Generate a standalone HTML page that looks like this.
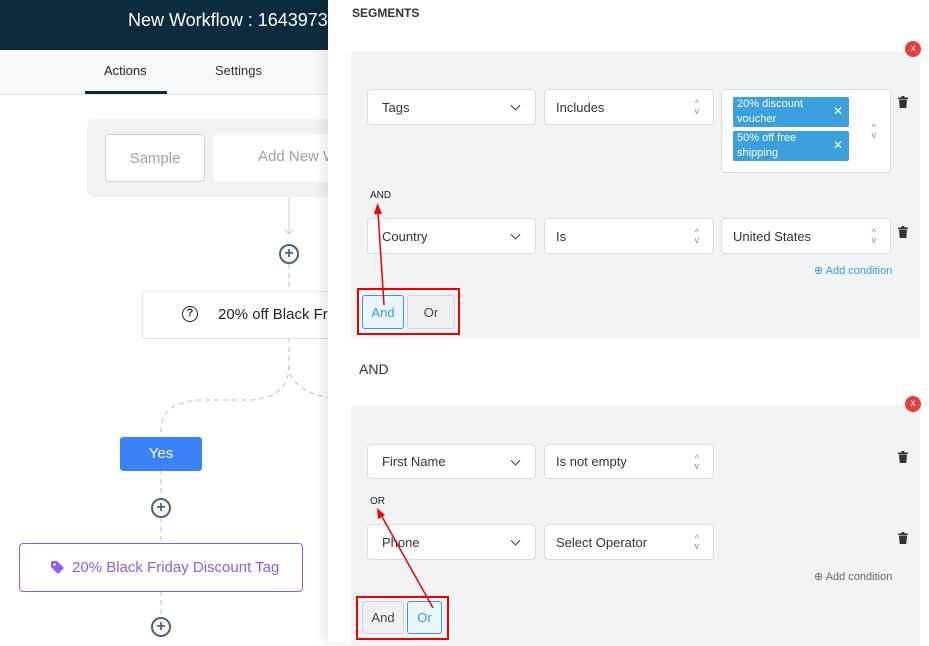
<!DOCTYPE html>
<html><head><meta charset="utf-8"><style>
*{box-sizing:border-box;margin:0;padding:0}
body{width:929px;height:642px;overflow:hidden;position:relative;font-family:"Liberation Sans",sans-serif;background:#fff;color:#333}
.a{position:absolute}
.sel{position:absolute;background:#fff;border:1px solid #d9dce1;border-radius:4px;font-size:13px;color:#333;padding-left:14px;display:flex;align-items:center}
.chev{position:absolute;right:16px;top:50%;width:7px;height:7px;border-right:1.8px solid #333;border-bottom:1.8px solid #333;transform:translateY(-70%) rotate(45deg)}
.ud{position:absolute;right:14px;top:50%;transform:translateY(-50%);font-size:9px;line-height:8px;color:#888;text-align:center}
.trash{position:absolute;width:10px;height:12px}
.xc{position:absolute;width:16px;height:16px;border-radius:50%;background:#e53e3e;color:#fff;font-size:10px;text-align:center;line-height:15px}
.btn{position:absolute;border:1px solid #cfd3d8;border-radius:3px;background:#eef0f2;font-size:13px;display:flex;align-items:center;justify-content:center;color:#444}
.btn.on{border-color:#3b9bd6;color:#3b9bd6;background:#eaf4fb}
.chip{position:absolute;background:#3ba0dc;color:#fff;font-size:11px;line-height:15px;padding:0 4px;border-radius:2px;width:116px;height:30px}
.chip b{position:absolute;right:6px;top:7px;font-weight:normal;font-size:12px}
.addc{position:absolute;font-size:11px;color:#3b9bd6}
.plus{position:absolute;width:20px;height:20px;border:2px solid #4a6280;border-radius:50%;background:#fff;color:#4a6280;font-size:16px;font-weight:bold;line-height:15px;text-align:center}
</style></head><body>
<div class="a" style="left:0;top:0;width:330px;height:50px;background:#0d2b3e"></div>
<div class="a" style="left:128px;top:10px;color:#fff;font-size:18px;white-space:nowrap">New Workflow : 1643973</div>
<div class="a" style="left:0;top:50px;width:330px;height:45px;background:#f8f9fb;border-bottom:1px solid #e3e5e8"></div>
<div class="a" style="left:104px;top:63px;font-size:13px;color:#222">Actions</div>
<div class="a" style="left:215px;top:63px;font-size:13px;color:#333">Settings</div>
<div class="a" style="left:85px;top:91px;width:82px;height:3px;background:#0d2b3e"></div>
<div class="a" style="left:87px;top:119px;width:250px;height:78px;background:#f1f2f4;border-radius:6px"></div>
<div class="a" style="left:105px;top:134px;width:100px;height:48px;background:#fff;border:1px solid #cdd1d6;border-radius:4px;font-size:15px;color:#9aa3ad;display:flex;align-items:center;justify-content:center">Sample</div>
<div class="a" style="left:213px;top:134px;width:130px;height:48px;background:#fff;border-radius:4px;font-size:15px;color:#9aa3ad;padding:14px 0 0 45px;white-space:nowrap">Add New W</div>
<svg class="a" style="left:0;top:0" width="330" height="642">
<path d="M289 197V234M285 229L289 234L293 229" stroke="#c9ccd1" fill="none"/>
<path d="M289 264V291M289 338V365Q289 398 250 400L200 400Q161 402 161 430V437M289 365Q289 390 330 398M161 470V498M161 518V543M161 591V617" stroke="#c9ccd4" stroke-width="1.3" stroke-dasharray="5,4" fill="none"/>
</svg>
<div class="plus" style="left:279px;top:244px">+</div>
<div class="a" style="left:142px;top:291px;width:200px;height:48px;background:#fff;border:1px solid #dfe2e6;border-radius:4px"></div>
<div class="a" style="left:182px;top:306px;width:16px;height:16px;border:1.5px solid #222;border-radius:50%;font-size:11px;font-weight:bold;text-align:center;line-height:13px">?</div>
<div class="a" style="left:218px;top:306px;font-size:15px;color:#222;white-space:nowrap">20% off Black Frid</div>
<div class="a" style="left:120px;top:437px;width:82px;height:34px;background:#3b82f6;border-radius:3px;color:#fff;font-size:15px;text-align:center;line-height:34px">Yes</div>
<div class="plus" style="left:151px;top:498px">+</div>
<div class="a" style="left:19px;top:543px;width:284px;height:49px;border:1px solid #8b5cf6;border-radius:4px;background:#fff"></div>
<div class="a" style="left:72px;top:559px;font-size:15px;color:#8b5cf6;white-space:nowrap">20% Black Friday Discount Tag</div>
<svg class="a" style="left:50px;top:560px" width="16" height="16"><path d="M1 2V7L8 14L14 8L7 1H2Z" fill="#8b5cf6"/><circle cx="4.5" cy="4.5" r="1.3" fill="#fff"/></svg>
<div class="plus" style="left:151px;top:617px">+</div>
<div class="a" style="left:328px;top:0;width:601px;height:642px;background:#fff;box-shadow:-6px 0 10px rgba(0,0,0,0.08)"></div>
<div class="a" style="left:352px;top:6px;font-size:12px;font-weight:bold;color:#333">SEGMENTS</div>
<div class="a" style="left:351px;top:51px;width:569px;height:288px;background:#f2f3f5;border-radius:3px"></div>
<div class="xc" style="left:905px;top:41px">x</div>
<div class="sel" style="left:367px;top:89px;width:169px;height:36px">Tags<span class="chev"></span></div>
<div class="sel" style="left:544px;top:89px;width:170px;height:36px;padding-left:11px">Includes<span class="ud">^<br>v</span></div>
<div class="sel" style="left:721px;top:89px;width:170px;height:84px"><span class="ud">^<br>v</span></div>
<div class="chip" style="left:733px;top:97px">20% discount<br>voucher<b>✕</b></div>
<div class="chip" style="left:733px;top:131px">50% off free<br>shipping<b>✕</b></div>
<svg class="trash" style="left:898px;top:96px" viewBox="0 0 10 12"><path d="M0 1.5H10V3H0ZM3.5 0H6.5V1.5H3.5ZM1 3.5H9L8.3 12H1.7Z" fill="#333"/></svg>
<div class="a" style="left:370px;top:190px;font-size:10px;color:#222">AND</div>
<div class="sel" style="left:367px;top:218px;width:169px;height:36px">Country<span class="chev"></span></div>
<div class="sel" style="left:544px;top:218px;width:170px;height:36px;padding-left:11px">Is<span class="ud">^<br>v</span></div>
<div class="sel" style="left:721px;top:218px;width:170px;height:36px;padding-left:11px">United States<span class="ud">^<br>v</span></div>
<svg class="trash" style="left:898px;top:226px" viewBox="0 0 10 12"><path d="M0 1.5H10V3H0ZM3.5 0H6.5V1.5H3.5ZM1 3.5H9L8.3 12H1.7Z" fill="#333"/></svg>
<div class="addc" style="left:814px;top:264px">⊕ Add condition</div>
<div class="btn on" style="left:362px;top:295px;width:42px;height:34px">And</div>
<div class="btn" style="left:407px;top:295px;width:48px;height:34px">Or</div>
<div class="a" style="left:357px;top:288px;width:103px;height:47px;border:2px solid #e00"></div>
<div class="a" style="left:359px;top:361px;font-size:14px;color:#333">AND</div>
<div class="a" style="left:351px;top:406px;width:569px;height:240px;background:#f2f3f5;border-radius:3px"></div>
<div class="xc" style="left:905px;top:396px">x</div>
<div class="sel" style="left:367px;top:444px;width:169px;height:35px">First Name<span class="chev"></span></div>
<div class="sel" style="left:544px;top:444px;width:170px;height:35px;padding-left:11px">Is not empty<span class="ud">^<br>v</span></div>
<svg class="trash" style="left:898px;top:451px" viewBox="0 0 10 12"><path d="M0 1.5H10V3H0ZM3.5 0H6.5V1.5H3.5ZM1 3.5H9L8.3 12H1.7Z" fill="#333"/></svg>
<div class="a" style="left:370px;top:496px;font-size:10px;color:#222">OR</div>
<div class="sel" style="left:367px;top:524px;width:169px;height:36px">Phone<span class="chev"></span></div>
<div class="sel" style="left:544px;top:524px;width:170px;height:36px;padding-left:11px">Select Operator<span class="ud">^<br>v</span></div>
<svg class="trash" style="left:898px;top:532px" viewBox="0 0 10 12"><path d="M0 1.5H10V3H0ZM3.5 0H6.5V1.5H3.5ZM1 3.5H9L8.3 12H1.7Z" fill="#333"/></svg>
<div class="addc" style="left:814px;top:570px;color:#666">⊕ Add condition</div>
<div class="btn" style="left:362px;top:601px;width:42px;height:33px">And</div>
<div class="btn on" style="left:407px;top:601px;width:35px;height:33px">Or</div>
<div class="a" style="left:356px;top:596px;width:93px;height:44px;border:2px solid #e00"></div>
<svg class="a" style="left:0;top:0" width="929" height="642">
<path d="M384 305L378 212" stroke="#e00" stroke-width="1.5"/><path d="M377.5 203L374 214L382 214Z" fill="#e00"/>
<path d="M433 608L381 515" stroke="#e00" stroke-width="1.5"/><path d="M377 508L378 519L385 515Z" fill="#e00"/>
</svg>
</body></html>
